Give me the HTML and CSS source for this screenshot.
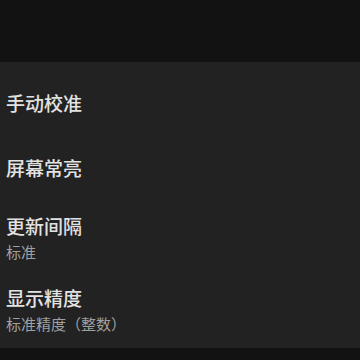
FILE: index.html
```html
<!DOCTYPE html>
<html>
<head>
<meta charset="UTF-8">
<title>设置</title>
<link rel="stylesheet" href="styles.css">
</head>
<body>
<div class="topbar"></div>
<ul class="prefs">
  <li class="pref single"><span class="title">手动校准</span></li>
  <li class="pref single"><span class="title">屏幕常亮</span></li>
  <li class="pref double">
    <span class="title">更新间隔</span>
    <span class="summary">标准</span>
  </li>
  <li class="pref double">
    <span class="title">显示精度</span>
    <span class="summary">标准精度（整数）</span>
  </li>
</ul>
</body>
</html>
```
FILE: styles.css
```css
html, body {
  margin: 0;
  padding: 0;
  height: 100%;
  background: #121212;
  font-family: "Noto Sans CJK SC", "Noto Sans", sans-serif;
}
.topbar {
  height: 62px;
  background: #121212;
}
.prefs {
  list-style: none;
  margin: 0;
  padding: 8px 0 4px;
  background: #222222;
}
.pref {
  display: flex;
  flex-direction: column;
  padding: 0 6px;
}
.pref.single {
  height: 65px;
  justify-content: center;
}
.pref.double {
  height: 72px;
  padding-top: 13px;
  box-sizing: border-box;
}
.title {
  font-size: 19px;
  line-height: 26px;
  font-weight: 500;
  color: #e2e2e2;
}
.summary {
  font-size: 15px;
  line-height: 26px;
  color: #a0a0a0;
}
```
